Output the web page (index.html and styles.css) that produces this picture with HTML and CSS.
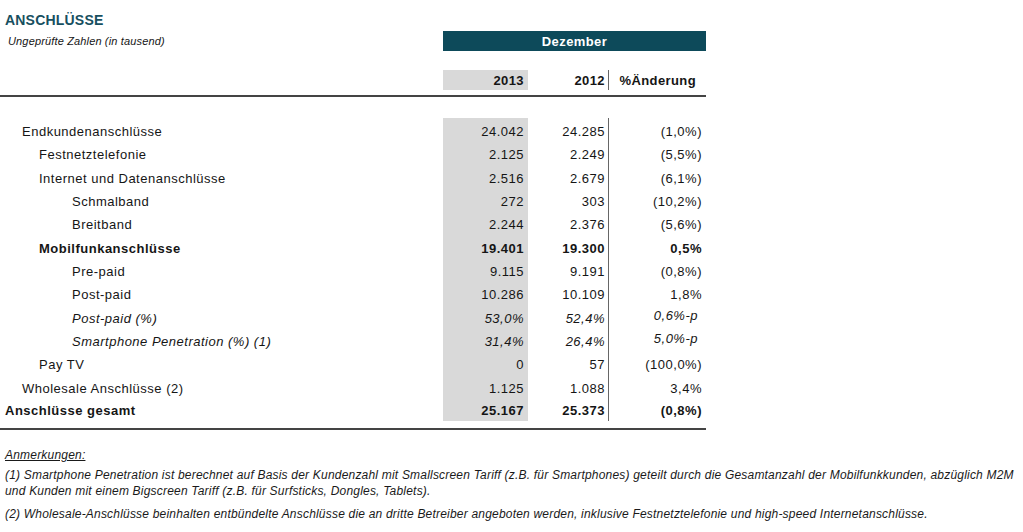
FILE: index.html
```html
<!DOCTYPE html>
<html lang="de">
<head>
<meta charset="utf-8">
<title>Anschlüsse</title>
<link rel="stylesheet" href="styles.css">
</head>
<body>
<div class="page">
  <div class="head">
    <div class="titles">
      <h1 class="title">ANSCHLÜSSE</h1>
      <p class="sub">Ungeprüfte Zahlen (in tausend)</p>
    </div>
    <div class="periods">
      <div class="dez">Dezember</div>
      <div class="years">
        <div class="c13">2013</div>
        <div class="c12">2012</div>
        <div class="pct">%Änderung</div>
      </div>
    </div>
  </div>
  <div class="rule"></div>
  <div class="data">
    <div class="lbl l1 first">Endkundenanschlüsse</div><div class="c13 first">24.042</div><div class="c12 first">24.285</div><div class="pct first">(1,0%)</div>
    <div class="lbl l2">Festnetztelefonie</div><div class="c13">2.125</div><div class="c12">2.249</div><div class="pct">(5,5%)</div>
    <div class="lbl l2">Internet und Datenanschlüsse</div><div class="c13">2.516</div><div class="c12">2.679</div><div class="pct">(6,1%)</div>
    <div class="lbl l3">Schmalband</div><div class="c13">272</div><div class="c12">303</div><div class="pct">(10,2%)</div>
    <div class="lbl l3">Breitband</div><div class="c13">2.244</div><div class="c12">2.376</div><div class="pct">(5,6%)</div>
    <div class="lbl l2 b">Mobilfunkanschlüsse</div><div class="c13 b">19.401</div><div class="c12 b">19.300</div><div class="pct b">0,5%</div>
    <div class="lbl l3">Pre-paid</div><div class="c13">9.115</div><div class="c12">9.191</div><div class="pct">(0,8%)</div>
    <div class="lbl l3">Post-paid</div><div class="c13">10.286</div><div class="c12">10.109</div><div class="pct">1,8%</div>
    <div class="lbl l3 i">Post-paid (%)</div><div class="c13 i">53,0%</div><div class="c12 i">52,4%</div><div class="pct i pp">0,6%-p</div>
    <div class="lbl l3 i">Smartphone Penetration (%) (1)</div><div class="c13 i">31,4%</div><div class="c12 i">26,4%</div><div class="pct i pp">5,0%-p</div>
    <div class="lbl l2">Pay TV</div><div class="c13">0</div><div class="c12">57</div><div class="pct">(100,0%)</div>
    <div class="lbl l1">Wholesale Anschlüsse (2)</div><div class="c13">1.125</div><div class="c12">1.088</div><div class="pct">3,4%</div>
    <div class="lbl l0 b">Anschlüsse gesamt</div><div class="c13 b">25.167</div><div class="c12 b">25.373</div><div class="pct b">(0,8%)</div>
  </div>
  <div class="rule bottom"></div>
  <div class="notes">
    <p class="nh">Anmerkungen:</p>
    <p class="n1">(1) Smartphone Penetration ist berechnet auf Basis der Kundenzahl mit Smallscreen Tariff (z.B. für Smartphones) geteilt durch die Gesamtanzahl der Mobilfunkkunden, abzüglich M2M<br>und Kunden mit einem Bigscreen Tariff (z.B. für Surfsticks, Dongles, Tablets).</p>
    <p class="n2">(2) Wholesale-Anschlüsse beinhalten entbündelte Anschlüsse die an dritte Betreiber angeboten werden, inklusive Festnetztelefonie und high-speed Internetanschlüsse.</p>
  </div>
</div>
</body>
</html>
```

FILE: styles.css
```css
* { box-sizing: border-box; }
html, body { margin: 0; padding: 0; background: #fff; }
body {
  font-family: "Liberation Sans", Arial, sans-serif;
  color: #151515;
  width: 1023px;
  height: 532px;
  overflow: hidden;
}
.page { padding-top: 11px; }
.head { display: flex; width: 706px; }
.titles { width: 443px; }
.title {
  margin: 0 0 0 5px;
  font-size: 14px;
  line-height: 18px;
  font-weight: bold;
  color: #174f60;
  letter-spacing: 0.2px;
}
.sub {
  margin: 6px 0 0 8px;
  font-size: 11px;
  line-height: 13px;
  font-style: italic;
  letter-spacing: 0.15px;
}
.periods { width: 263px; padding-top: 20px; }
.dez {
  height: 20px;
  background: #0d4a5a;
  color: #fff;
  font-weight: bold;
  font-size: 13px;
  letter-spacing: 0.4px;
  display: flex;
  align-items: center;
  justify-content: center;
}
.years {
  margin-top: 19px;
  display: grid;
  grid-template-columns: 85px 81px 97px;
  height: 20px;
  font-weight: bold;
  font-size: 13px;
  letter-spacing: 0.4px;
}
.years > div { display: flex; align-items: center; }
.years .c13 { background: #d9d9d9; justify-content: flex-end; padding-right: 4px; }
.years .c12 { justify-content: flex-end; padding-right: 3px; border-right: 1px solid #666; }
.years .pct { justify-content: flex-end; padding-right: 10px; }
.rule { width: 706px; height: 2px; background: #444; margin-top: 5px; }
.data {
  margin-top: 21px;
  width: 706px;
  display: grid;
  grid-template-columns: 443px 85px 81px 97px;
  grid-template-rows: 25.33px repeat(11, 23.33px) 21px;
  font-size: 13px;
  letter-spacing: 0.5px;
}
.data > div {
  display: flex;
  align-items: center;
  white-space: nowrap;
}
.data .first { padding-top: 2px; }
.data .c13 { background: #d9d9d9; justify-content: flex-end; padding-right: 4px; }
.data .c12 { justify-content: flex-end; padding-right: 3px; border-right: 1px solid #666; }
.data .pct { justify-content: flex-end; padding-right: 4px; }
.data .pct.pp { padding-right: 8px; padding-bottom: 6px; }
.l0 { padding-left: 5px; }
.l1 { padding-left: 22px; }
.l2 { padding-left: 39px; }
.l3 { padding-left: 72px; }
.b { font-weight: bold; }
.i { font-style: italic; }
.rule.bottom { margin-top: 7px; }
.notes {
  padding-left: 5px;
  margin-top: 17px;
  font-size: 12px;
  font-style: italic;
  white-space: nowrap;
  letter-spacing: 0.2px;
  color: #1a1a1a;
}
.notes p { margin: 0; line-height: 16px; }
.nh { text-decoration: underline; }
.n1 { margin-top: 4px !important; }
.n2 { margin-top: 7px !important; }
```
